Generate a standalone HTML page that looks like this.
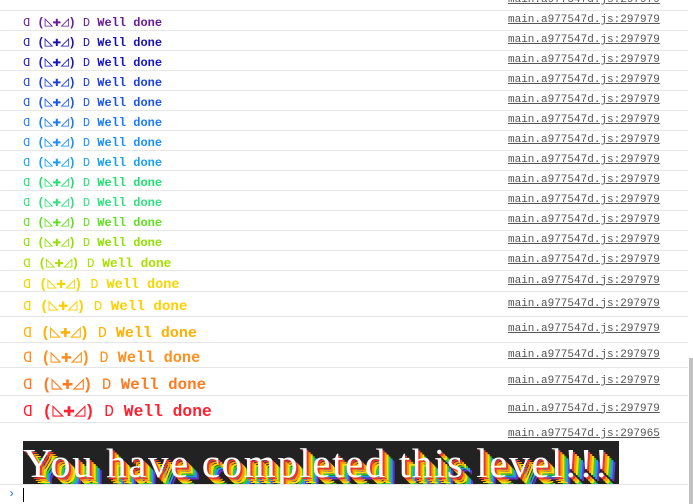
<!DOCTYPE html>
<html><head><meta charset="utf-8"><style>
body{margin:0;width:693px;height:504px;background:#fff;position:relative;overflow:hidden;font-family:"Liberation Mono",monospace}
.r{position:absolute;left:0;width:688px;border-bottom:1px solid #e6e6e6;box-sizing:border-box}
.t{position:absolute;left:23px;white-space:pre;font-weight:bold;line-height:1}
.t .m{display:inline-block;transform:scaleX(-1);font-weight:normal}
.t .n{font-weight:normal}
.t .g{font-size:1.2em;letter-spacing:-0.05em}
.l{position:absolute;left:508px;font-size:11px;color:#555;text-decoration:underline;line-height:1}
#sb{position:absolute;left:689px;top:358px;width:4px;height:146px;background:#c1c1c1}
</style></head><body>
<div class="r" style="top:0;height:11px"><span class="l" style="top:-5px">main.a977547d.js:297979</span></div>
<div id="rows"></div>
<div class="r" style="top:423px;height:62px">
<span class="l" style="top:6px">main.a977547d.js:297965</span>
<div style="position:absolute;left:23px;top:18px;width:596px;height:43px;background:#222;overflow:hidden">
<div style="position:absolute;left:0;top:-2px;font-family:'Liberation Serif',serif;font-size:41px;color:#fff;white-space:pre;text-shadow:2px 2px 0 #e33,4px 4px 0 #f90,6px 6px 0 #fd0,8px 8px 0 #3c3,10px 10px 0 #29f,12px 12px 0 #63c;letter-spacing:1.6px">You have completed this level!!!</div>
</div></div>
<div style="position:absolute;left:8px;top:487px;color:#1a73e8;font-size:12px">›</div>
<div style="position:absolute;left:23px;top:488px;width:1px;height:14px;background:#000"></div>
<div id="sb"></div>
<script>
var rows=[[11,20,12,'#6a1b9a'],[31,20,12,'#1a12b0'],[51,20,12,'#1515c8'],[71,20,12,'#1a3ee0'],[91,20,12,'#1a55f0'],[111,20,12,'#1a7aff'],[131,20,12,'#1a90ff'],[151,20,12,'#1aa0f0'],[171,20,12,'#20e070'],[191,20,12,'#30e080'],[211,20,12,'#60e020'],[231,20,12,'#90e000'],[251,20,12.8,'#a8e000'],[271,21,13.5,'#f0d800'],[292,25,14.2,'#ffd000'],[317,26,15,'#ffb000'],[343,25,15.3,'#ff9020'],[368,28,15.8,'#ff7a20'],[396,27,16.3,'#ff2030']];
var h='';rows.forEach(function(r){var fs=r[2];h+='<div class="r" style="top:'+r[0]+'px;height:'+r[1]+'px"><span class="t" style="font-size:'+fs+'px;color:'+r[3]+';top:'+(r[1]/2-fs/2+1)+'px"><span class="m">D</span> (<span class="g">◺✚◿</span>) <span class="n">D</span> Well done</span><span class="l" style="top:'+(r[1]/2-6)+'px">main.a977547d.js:297979</span></div>';});
document.getElementById('rows').innerHTML=h;
</script>
</body></html>
